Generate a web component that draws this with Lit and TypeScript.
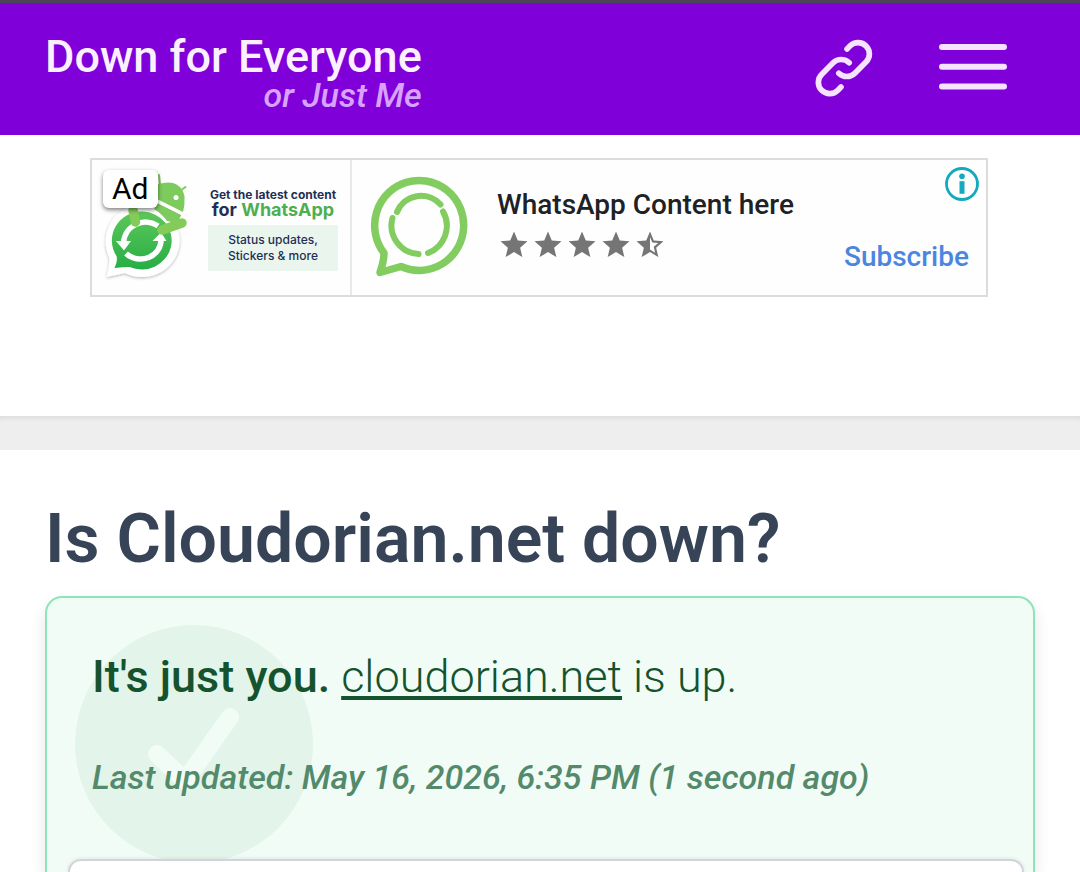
import { LitElement, html, css } from "lit";
import { customElement, property } from "lit/decorators.js";

const STAR = "M12 17.270L18.180 21l-1.640-7.030L22 9.240l-7.190-.610L12 2 9.190 8.630 2 9.240l5.460 4.730L5.820 21z";
const HALF_STAR =
  "M22 9.240l-7.190-.620L12 2 9.190 8.630 2 9.240l5.460 4.730L5.820 21 12 17.270 18.180 21l-1.630-7.030L22 9.240zM12 15.400V6.100l1.710 4.040 4.380.380-3.320 2.880 1 4.280L12 15.400z";

@customElement("site-header")
class SiteHeader extends LitElement {
  static styles = css`
    :host { display: block; }
    .bar {
      display: flex;
      align-items: flex-start;
      justify-content: space-between;
      box-sizing: border-box;
      padding: 31px 73px 25px 45px;
      background: #8000d9;
      border-top: 3px solid #4a4458;
    }
    .brand {
      display: flex;
      flex-direction: column;
      text-align: right;
      text-decoration: none;
      font-weight: 500;
      color: #fbf0ff;
    }
    .name { font-size: 45px; line-height: 46px; }
    .sub { font-size: 34px; line-height: 30px; font-style: italic; color: #d8a3ff; }
    .tools { display: flex; gap: 61px; }
    .tool {
      display: block;
      padding: 0;
      border: 0;
      background: none;
      color: #f5e3ff;
      cursor: pointer;
    }
    .icon { display: block; fill: none; stroke: currentColor; stroke-linecap: round; stroke-linejoin: round; }
  `;
  render() {
    return html`
      <header class="bar">
        <a class="brand" href="#">
          <span class="name">Down for Everyone</span>
          <span class="sub">or Just Me</span>
        </a>
        <div class="tools">
          <button class="tool" aria-label="Copy link">
            <svg class="icon" width="68" height="68" viewBox="0 0 24 24" stroke-width="2">
              <path d="M13.828 10.172a4 4 0 00-5.656 0l-4 4a4 4 0 105.656 5.656l1.102-1.101m-.758-4.899a4 4 0 005.656 0l4-4a4 4 0 00-5.656-5.656l-1.1 1.1" />
            </svg>
          </button>
          <button class="tool" aria-label="Menu">
            <svg class="icon" width="68" height="68" viewBox="0 0 68 68" stroke-width="6">
              <path d="M3 13h62M3 32.800h62M3 52.500h62" />
            </svg>
          </button>
        </div>
      </header>
    `;
  }
}

@customElement("ad-banner")
class AdBanner extends LitElement {
  static styles = css`
    :host { display: block; }
    .ad {
      display: flex;
      box-sizing: border-box;
      max-width: 898px;
      margin: 0 auto;
      border: 2px solid #dcdcdc;
      background: #fefefe;
    }
    .creative {
      position: relative;
      display: flex;
      align-items: center;
      gap: 15px;
      box-sizing: border-box;
      padding: 0 12px 0 11px;
      border-right: 2px solid #e8e8e8;
    }
    .badge {
      position: absolute;
      left: 11px;
      top: 10px;
      padding: 2px 9px;
      border-radius: 6px;
      background: #fff;
      box-shadow: 0 2px 4px rgba(0, 0, 0, 0.5);
      font-size: 30px;
      line-height: 34px;
      color: #000;
    }
    .art { display: block; flex: none; }
    .copy {
      display: flex;
      flex-direction: column;
      width: 130px;
      padding-top: 5px;
      font-family: Inter, sans-serif;
      color: #1f2f54;
      text-align: center;
      white-space: nowrap;
    }
    .line1 { font-size: 12px; line-height: 12px; font-weight: 700; }
    .line2 { font-size: 18px; line-height: 17px; font-weight: 700; }
    .green { color: #4caf50; }
    .more {
      margin-top: 7px;
      padding: 7px 0 7px;
      background: #eaf6ed;
      font-size: 12px;
      line-height: 16px;
      font-weight: 500;
    }
    .logo { display: block; flex: none; width: 134px; height: 135px; }
    .info {
      display: flex;
      flex-direction: column;
      flex: 1;
      padding: 28px 0 0 11px;
    }
    .title { font-size: 28px; line-height: 34px; font-weight: 500; color: #202124; white-space: nowrap; }
    .stars { display: flex; margin-top: 8px; }
    .star { display: block; fill: #757575; }
    .side {
      display: flex;
      flex-direction: column;
      align-items: flex-end;
      justify-content: space-between;
      padding: 7px 7px 21px 0;
    }
    .choices { display: block; padding: 0; border: 0; background: none; cursor: pointer; }
    .choices svg { display: block; }
    .cta {
      margin-right: 10px;
      font-size: 28px;
      line-height: 34px;
      font-weight: 500;
      color: #4a86e0;
      text-decoration: none;
    }
  `;
  render() {
    return html`
      <section class="ad" aria-label="Advertisement">
        <div class="creative">
          <svg class="art" width="90" height="126" viewBox="103 165 90 126" aria-hidden="true">
            <defs>
              <linearGradient id="g" x1="0" y1="0" x2="0" y2="1">
                <stop offset="0" stop-color="#5cc85a" />
                <stop offset="1" stop-color="#27ad45" />
              </linearGradient>
              <filter id="s" x="-20%" y="-20%" width="140%" height="140%">
                <feDropShadow dx="0" dy="1" stdDeviation="1.500" flood-opacity="0.3" />
              </filter>
            </defs>
            <path d="M150 200l31 15-5 11-26 2z" fill="#7ccb5c" />
            <path d="M142 204a37.500 36.500 0 1 1-17 69q-9 2-18.500 4 3-9 3-19A37.500 37.500 0 0 1 142 204z" fill="#fff" filter="url(#s)" />
            <path d="M142.500 211.500a30 29 0 1 1-13 55.500q-7 0-15 1 3.500-7 2-12A30 29 0 0 1 142.500 211.500z" fill="url(#g)" />
            <path d="M157 203l24 12-4 8-10-2q-5-7-13-12z" fill="#7ccb5c" />
            <path d="M155 198l3-14q22-6 26.500 12 .5 9-1.500 16z" fill="#7ccb5c" />
            <path d="M156 200.500l27 14" stroke="#fff" stroke-width="2.500" />
            <path d="M180 191l5.500-4M160 184l-1-9" stroke="#7ccb5c" stroke-width="2" stroke-linecap="round" />
            <circle cx="176" cy="197.500" r="2.500" fill="#fff" />
            <g fill="none" stroke="#fff" stroke-width="5.500">
              <path d="M158 226a22 22 0 0 0-34.500 17" />
              <path d="M126 253.500a20.500 19 0 0 0 35-14" />
            </g>
            <path d="M116 241h15l-7 9.500zM152.500 241h14l-5.500-8.500z" fill="#fff" />
            <path d="M133 210l2.500 12M162 230l20-7" stroke="#84cc5a" stroke-width="9.500" stroke-linecap="round" />
          </svg>
          <span class="badge">Ad</span>
          <div class="copy">
            <span class="line1">Get the latest content</span>
            <span class="line2">for <span class="green">WhatsApp</span></span>
            <span class="more">Status updates,<br />Stickers &amp; more</span>
          </div>
        </div>
        <svg class="logo" viewBox="352 160 134 135" fill="none" stroke="#82cc60" stroke-linecap="round" stroke-linejoin="round" aria-hidden="true">
          <path stroke-width="7.500" d="M384 253A44.500 45 0 1 1 401 266.500L380 272.500Q384 261 384 253z" />
          <path stroke-width="6" d="M397 212A26 26 0 0 1 440.500 204.500M443 211.500A29 29 0 0 1 428 253M418.500 254A28.500 28.500 0 0 1 392.500 218" />
        </svg>
        <div class="info">
          <span class="title">WhatsApp Content here</span>
          <div class="stars" role="img" aria-label="4.5 stars">
            ${[STAR, STAR, STAR, STAR, HALF_STAR].map(
              (d) => html`<svg class="star" width="34" height="34" viewBox="-0.6 0.9 25.2 25.2"><path d=${d} /></svg>`
            )}
          </div>
        </div>
        <div class="side">
          <button class="choices" aria-label="Ad choices">
            <svg width="34" height="34" viewBox="0 0 34 34">
              <circle cx="17" cy="17" r="15.500" fill="none" stroke="#13a9bf" stroke-width="2.800" />
              <circle cx="17" cy="9.300" r="2.800" fill="#13a9bf" />
              <path d="M14.500 14.200h5v12.600h-5z" fill="#13a9bf" />
            </svg>
          </button>
          <a class="cta" href="#">Subscribe</a>
        </div>
      </section>
    `;
  }
}

@customElement("status-card")
class StatusCard extends LitElement {
  @property() domain = "";
  @property() checked = "";
  static styles = css`
    :host { display: flex; flex-direction: column; }
    .card {
      position: relative;
      display: flex;
      flex-direction: column;
      flex: 1;
      border: 2px solid #8be5b8;
      border-bottom: 0;
      border-radius: 17px 17px 0 0;
      background: #f2fcf7;
      box-shadow: 0 8px 16px rgba(0, 0, 0, 0.1);
      color: #14532d;
    }
    .mark { position: absolute; left: 28px; top: 27px; }
    .verdict, .checked, .panel { position: relative; }
    .verdict {
      margin: 0;
      padding: 51px 45px 0;
      font-size: 45px;
      line-height: 56px;
      font-weight: 300;
    }
    .verdict strong { font-weight: 500; }
    .link {
      color: inherit;
      text-decoration-thickness: 4px;
      text-underline-offset: 4px;
      text-decoration-skip-ink: none;
    }
    .checked {
      margin: 0;
      padding: 52px 45px 0;
      font-size: 34px;
      line-height: 40px;
      font-weight: 500;
      font-style: italic;
      color: #538a6b;
    }
    .panel {
      flex: 1;
      min-height: 11px;
      margin: 62px 9px 0 21px;
      border: 2px solid #d1d5db;
      border-bottom: 0;
      border-radius: 20px 20px 0 0;
      background: #fff;
      box-shadow: 0 0 4px rgba(0, 0, 0, 0.1);
    }
  `;
  render() {
    return html`
      <section class="card">
        <svg class="mark" width="238" height="238" viewBox="0 0 238 238" aria-hidden="true">
          <circle cx="119" cy="119" r="119" fill="#e3f4ea" />
          <path d="M82 129l28 27 45-64" fill="none" stroke="#f2fcf7" stroke-width="18" stroke-linecap="round" stroke-linejoin="round" />
        </svg>
        <p class="verdict"><strong>It's just you.</strong> <a class="link" href="#">${this.domain}</a> is up.</p>
        <p class="checked">Last updated: ${this.checked}</p>
        <div class="panel"></div>
      </section>
    `;
  }
}

@customElement("app-root")
class AppRoot extends LitElement {
  static styles = css`
    :host {
      display: flex;
      flex-direction: column;
      min-height: 100vh;
      font-family: Roboto, "Liberation Sans", sans-serif;
      background: #fff;
    }
    .slot { padding: 23px 92px 119px 90px; }
    .divider {
      height: 34px;
      background: #eee;
      box-shadow: inset 0 5px 5px -3px rgba(0, 0, 0, 0.08);
    }
    .main {
      display: flex;
      flex-direction: column;
      flex: 1;
      padding: 48px 45px 0;
    }
    .title {
      margin: 0 0 16px;
      font-size: 68px;
      line-height: 82px;
      font-weight: 600;
      color: #374357;
    }
    .status { flex: 1; }
  `;
  render() {
    return html`
      <site-header></site-header>
      <div class="slot"><ad-banner></ad-banner></div>
      <div class="divider"></div>
      <main class="main">
        <h1 class="title">Is Cloudorian.net down?</h1>
        <status-card class="status" domain="cloudorian.net" checked="May 16, 2026, 6:35 PM (1 second ago)"></status-card>
      </main>
    `;
  }
}
